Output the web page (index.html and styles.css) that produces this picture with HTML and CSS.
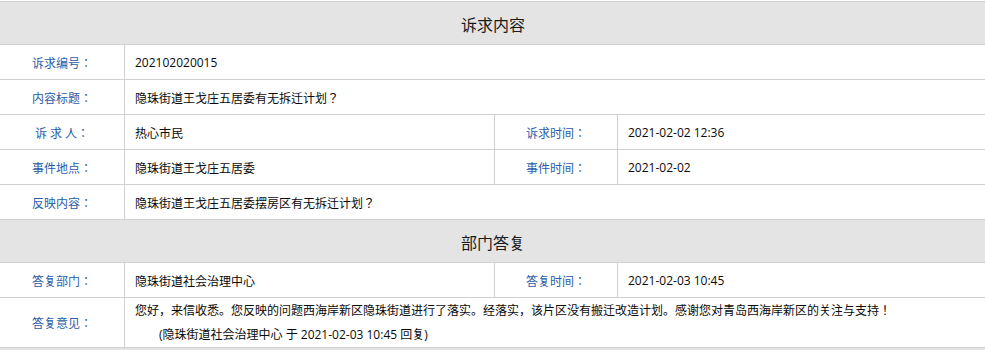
FILE: index.html
```html
<!DOCTYPE html>
<html lang="zh-CN">
<head>
<meta charset="utf-8">
<title>诉求内容</title>
<link rel="stylesheet" href="styles.css">
</head>
<body>
<table class="detail">
  <colgroup>
    <col class="c-label">
    <col class="c-value">
    <col class="c-label2">
    <col class="c-value2">
  </colgroup>
  <tr class="head"><th colspan="4">诉求内容</th></tr>
  <tr class="row"><td class="label">诉求编号：</td><td class="value" colspan="3">202102020015</td></tr>
  <tr class="row"><td class="label">内容标题：</td><td class="value" colspan="3">隐珠街道王戈庄五居委有无拆迁计划？</td></tr>
  <tr class="row"><td class="label">诉 求 人：</td><td class="value">热心市民</td><td class="label">诉求时间：</td><td class="value">2021-02-02 12:36</td></tr>
  <tr class="row"><td class="label">事件地点：</td><td class="value">隐珠街道王戈庄五居委</td><td class="label">事件时间：</td><td class="value">2021-02-02</td></tr>
  <tr class="row"><td class="label">反映内容：</td><td class="value" colspan="3">隐珠街道王戈庄五居委摆房区有无拆迁计划？</td></tr>
  <tr class="head"><th colspan="4">部门答复</th></tr>
  <tr class="row"><td class="label">答复部门：</td><td class="value">隐珠街道社会治理中心</td><td class="label">答复时间：</td><td class="value">2021-02-03 10:45</td></tr>
  <tr class="row tall"><td class="label">答复意见：</td><td class="value" colspan="3">
    <div class="reply">您好，来信收悉。您反映的问题西海岸新区隐珠街道进行了落实。经落实，该片区没有搬迁改造计划。感谢您对青岛西海岸新区的关注与支持！</div>
    <div class="reply sign">(隐珠街道社会治理中心 于 2021-02-03 10:45 回复)</div>
  </td></tr>
  <tr class="head"><th colspan="4"></th></tr>
</table>
</body>
</html>
```

FILE: styles.css
```css
html, body {
  margin: 0;
  padding: 0;
  background: #fff;
}
body {
  font-family: "Open Sans", "Noto Sans CJK JP", "Noto Sans CJK SC", sans-serif;
  font-size: 12px;
  font-feature-settings: "locl" 0;
  color: #111;
  overflow: hidden;
}
.detail {
  border-collapse: collapse;
  table-layout: fixed;
  width: 987px;
  margin: 1px 0 0 -1px;
}
.c-label { width: 125px; }
.c-value { width: 370px; }
.c-label2 { width: 123px; }
.c-value2 { width: 369px; }
.detail th,
.detail td {
  border: 1px solid #d0d0d0;
  padding: 1px 0 0 0;
}
.head th {
  height: 41px;
  background: #e4e4e4;
  font-size: 16px;
  font-weight: normal;
  color: #1a1a1a;
  text-align: center;
}
.row td {
  height: 33px;
}
.label {
  text-align: center;
  color: #2a5ca8;
}
.value {
  padding-left: 10px !important;
  color: #0a0a0a;
}
.tall td {
  height: 47px;
}
.reply {
  line-height: 24px;
}
.sign {
  padding-left: 24px;
}
```
